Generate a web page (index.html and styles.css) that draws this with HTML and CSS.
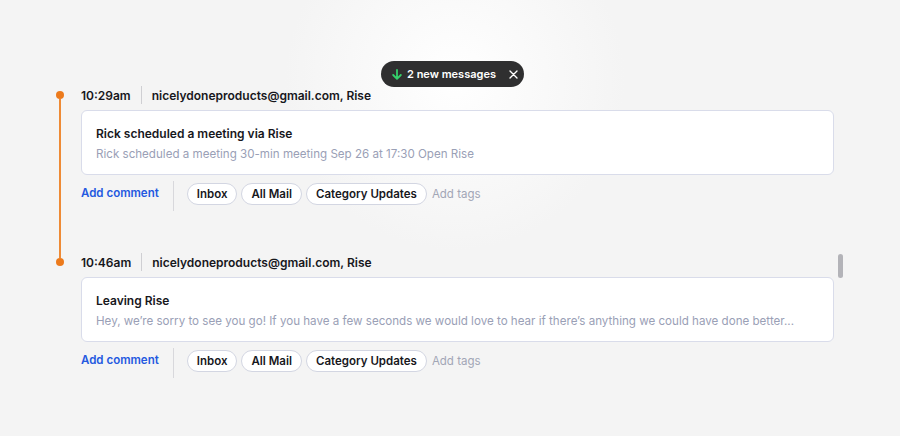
FILE: index.html
```html
<!DOCTYPE html>
<html>
	<head>
		<title>Thread</title>
		<link rel="stylesheet" href="styles.css">
	</head>
	<body>
		<div class="toast">
			<svg class="toast-arrow" width="10" height="11" viewBox="0 0 10 11"><path d="M5 1v8.5M1.2 6l3.8 3.8L8.8 6" fill="none" stroke="#34d06a" stroke-width="1.8" stroke-linecap="round" stroke-linejoin="round"/></svg>
			<span class="toast-text">2 new messages</span>
			<svg class="toast-close" width="9" height="9" viewBox="0 0 9 9"><path d="M1 1l7 7M8 1l-7 7" stroke="#fff" stroke-width="1.4" stroke-linecap="round"/></svg>
		</div>

		<div class="timeline">
			<div class="item first">
				<div class="rail">
					<div class="seg top"></div>
					<div class="dot"></div>
					<div class="seg bottom"></div>
				</div>
				<div class="main">
					<div class="head">
						<span class="time">10:29am</span>
						<span class="sep"></span>
						<span class="from">nicelydoneproducts@gmail.com, Rise</span>
					</div>
					<div class="card">
						<div class="title">Rick scheduled a meeting via Rise</div>
						<div class="preview">Rick scheduled a meeting 30-min meeting Sep 26 at 17:30 Open Rise</div>
					</div>
					<div class="actions">
						<a class="comment">Add comment</a>
						<div class="vsep"></div>
						<div class="tags">
							<span class="tag">Inbox</span>
							<span class="tag">All Mail</span>
							<span class="tag">Category Updates</span>
							<span class="addtag">Add tags</span>
						</div>
					</div>
				</div>
			</div>

			<div class="item last">
				<div class="rail">
					<div class="seg top"></div>
					<div class="dot"></div>
					<div class="seg bottom"></div>
				</div>
				<div class="main">
					<div class="head">
						<span class="time">10:46am</span>
						<span class="sep"></span>
						<span class="from">nicelydoneproducts@gmail.com, Rise</span>
					</div>
					<div class="card">
						<div class="title">Leaving Rise</div>
						<div class="preview">Hey, we’re sorry to see you go! If you have a few seconds we would love to hear if there’s anything we could have done better...</div>
					</div>
					<div class="actions">
						<a class="comment">Add comment</a>
						<div class="vsep"></div>
						<div class="tags">
							<span class="tag">Inbox</span>
							<span class="tag">All Mail</span>
							<span class="tag">Category Updates</span>
							<span class="addtag">Add tags</span>
						</div>
					</div>
				</div>
			</div>
		</div>

		<div class="thumb"></div>
	</body>
</html>
```

FILE: styles.css
```css
*{
	box-sizing: border-box;
}
body{
	margin: 0;
	height: 436px;
	overflow: hidden;
	background: radial-gradient(circle at 455px 80px, #ffffff 0, #fbfbfb 60px, #f4f4f4 170px);
	font-family: Inter, "Noto Sans", sans-serif;
	color: #17171c;
	position: relative;
}
.toast{
	position: absolute;
	top: 61px;
	left: 381px;
	width: 143px;
	height: 26px;
	border-radius: 13px;
	background: #2f2f30;
	color: #fff;
	font-size: 11px;
	font-weight: 600;
	white-space: nowrap;
	display: flex;
	align-items: center;
	padding-left: 11px;
	z-index: 5;
}
.toast-arrow{
	flex-shrink: 0;
	margin-right: 5px;
}
.toast-close{
	flex-shrink: 0;
	margin-left: 13px;
}
.timeline{
	padding: 85px 0 0 52px;
	width: 834px;
}
.item{
	display: flex;
	gap: 13px;
}
.first .main{
	padding-bottom: 41px;
}
.rail{
	width: 16px;
	display: flex;
	flex-direction: column;
	align-items: center;
}
.seg{
	width: 2px;
	background: #ee8a35;
}
.seg.top{
	height: 6px;
}
.seg.bottom{
	flex: 1;
}
.first .seg.top,
.last .seg.bottom{
	background: transparent;
}
.dot{
	width: 8px;
	height: 8px;
	border-radius: 50%;
	background: #ec7a1c;
}
.main{
	flex: 1;
	min-width: 0;
}
.head{
	height: 20px;
	display: flex;
	align-items: center;
	font-size: 12px;
	font-weight: 600;
}
.sep{
	width: 1px;
	height: 18px;
	background: #cfcfd3;
	margin: 0 10px;
}
.card{
	margin-top: 5px;
	background: #fff;
	border: 1px solid #d9dcea;
	border-radius: 6px;
	padding: 14px 14px 11px;
}
.title{
	font-size: 12px;
	font-weight: 600;
	line-height: 18px;
	margin-bottom: 2px;
}
.preview{
	font-size: 11.6px;
	line-height: 18px;
	color: #9aa0b6;
	white-space: nowrap;
	overflow: hidden;
}
.actions{
	display: flex;
	margin-top: 6px;
	height: 30px;
}
.comment{
	font-size: 11.5px;
	font-weight: 600;
	color: #2459e0;
	line-height: 24px;
	margin-right: 14px;
}
.vsep{
	width: 1px;
	background: #d8d8dc;
	margin-right: 13px;
}
.tags{
	display: flex;
	align-items: center;
	gap: 4px;
	height: 22px;
	margin-top: 2px;
}
.tag{
	height: 22px;
	line-height: 20px;
	padding: 0 9px;
	border: 1px solid #d3d6e2;
	border-radius: 11px;
	background: #fff;
	font-size: 11.5px;
	font-weight: 600;
}
.addtag{
	margin-left: 1px;
	font-size: 11.5px;
	color: #a2a6b6;
}
.thumb{
	position: absolute;
	left: 838px;
	top: 254px;
	width: 5px;
	height: 24px;
	border-radius: 3px;
	background: #b3b3b8;
}
```
